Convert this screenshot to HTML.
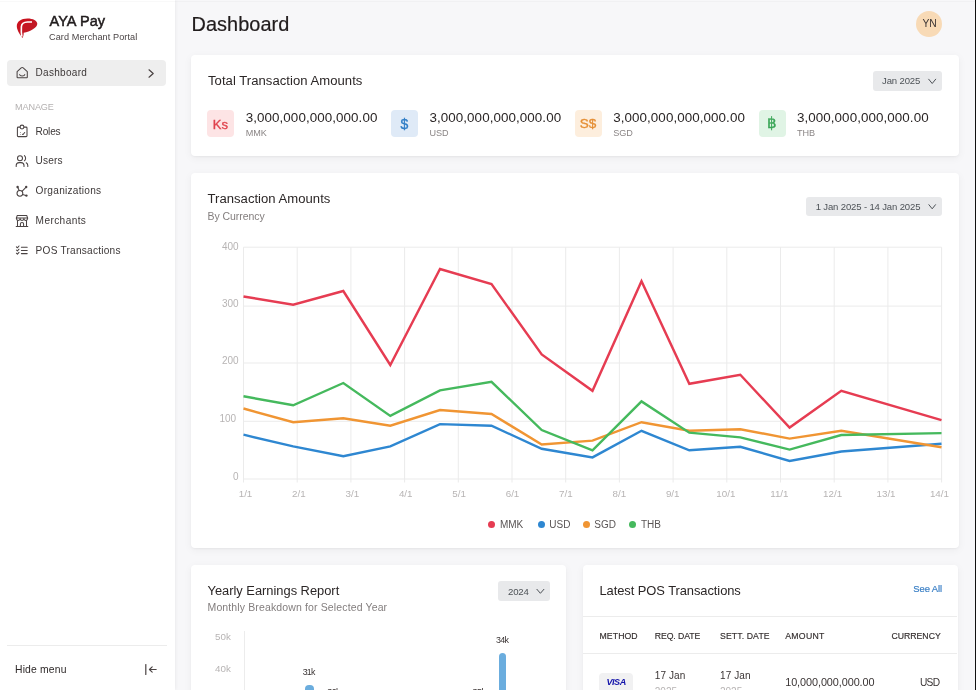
<!DOCTYPE html>
<html><head><meta charset="utf-8"><style>
html,body{margin:0;padding:0;width:976px;height:690px;overflow:hidden;background:#f6f6f9;font-family:"Liberation Sans", sans-serif;}
#root{position:relative;width:976px;height:690px;overflow:hidden;will-change:transform;}
span{position:absolute;display:block;white-space:nowrap;}
</style></head><body><div id="root">
<div style="position:absolute;left:175px;top:0px;width:801px;height:690px;background:#f7f7f9;border-radius:0px;"></div><div style="position:absolute;left:0px;top:0px;width:175px;height:690px;background:#ffffff;border-radius:0px;box-shadow:0 0 4px rgba(0,0,0,0.08);"></div><div style="position:absolute;left:0px;top:1px;width:975px;height:1px;background:rgba(0,0,0,0.025);border-radius:0px;"></div><svg style="position:absolute;left:0;top:0" width="60" height="50" viewBox="0 0 60 50">
<defs><linearGradient id="lg" x1="0" y1="0" x2="1" y2="1"><stop offset="0" stop-color="#cf0f1c"/><stop offset="1" stop-color="#b81f2a"/></linearGradient></defs>
<path d="M22.6 38.1 C20.4 35,17 30.6,16.8 26.5 C16.6 21.5,21 18.4,27.5 18.4 C33 18.4,37.3 20.5,37.3 23.8 C37.3 27.8,30.2 31.6,23.7 32.8 C23.7 34.6,23.3 36.6,22.6 38.1 Z" fill="url(#lg)"/>
<path d="M21.9 36.6 C21 33,21.2 29.5,21.4 26.6 C21.6 23.6,23.8 22.1,27.5 22 L32 22" fill="none" stroke="#ffffff" stroke-width="1.6"/>
</svg><div style="position:absolute;left:7px;top:60px;width:159px;height:25.5px;background:#eeeeee;border-radius:4px;"></div><div style="position:absolute;left:7px;top:644.5px;width:159.6px;height:1px;background:#ececec;border-radius:0px;"></div><div style="position:absolute;left:975px;top:0px;width:1px;height:690px;background:#111111;border-radius:0px;"></div><div style="position:absolute;left:916.4px;top:11px;width:26px;height:26px;background:#f8dab6;border-radius:13px;"></div><div style="position:absolute;left:191px;top:55px;width:767.5px;height:100.6px;background:#ffffff;border-radius:4px;box-shadow:0 1px 2px rgba(0,0,0,0.04),0 2px 8px rgba(0,0,0,0.05);"></div><div style="position:absolute;left:872.7px;top:71px;width:69.5px;height:20px;background:#e8e9eb;border-radius:3px;"></div><div style="position:absolute;left:207.3px;top:110px;width:27px;height:27px;background:#fde4e5;border-radius:4px;"></div><div style="position:absolute;left:391.05px;top:110px;width:27px;height:27px;background:#dfeaf7;border-radius:4px;"></div><div style="position:absolute;left:574.8px;top:110px;width:27px;height:27px;background:#fdeedd;border-radius:4px;"></div><div style="position:absolute;left:758.55px;top:110px;width:27px;height:27px;background:#e0f4e5;border-radius:4px;"></div><div style="position:absolute;left:191px;top:172.6px;width:767.5px;height:375.8px;background:#ffffff;border-radius:4px;box-shadow:0 1px 2px rgba(0,0,0,0.04),0 2px 8px rgba(0,0,0,0.05);"></div><div style="position:absolute;left:806.2px;top:196.6px;width:135.7px;height:19.6px;background:#e8e9eb;border-radius:3px;"></div><svg style="position:absolute;left:0;top:0" width="976" height="690"><line x1="243.50" y1="247.2" x2="243.50" y2="482.5" stroke="#ebebeb" stroke-width="1"/><line x1="297.20" y1="247.2" x2="297.20" y2="482.5" stroke="#ebebeb" stroke-width="1"/><line x1="350.90" y1="247.2" x2="350.90" y2="482.5" stroke="#ebebeb" stroke-width="1"/><line x1="404.60" y1="247.2" x2="404.60" y2="482.5" stroke="#ebebeb" stroke-width="1"/><line x1="458.30" y1="247.2" x2="458.30" y2="482.5" stroke="#ebebeb" stroke-width="1"/><line x1="512.00" y1="247.2" x2="512.00" y2="482.5" stroke="#ebebeb" stroke-width="1"/><line x1="565.70" y1="247.2" x2="565.70" y2="482.5" stroke="#ebebeb" stroke-width="1"/><line x1="619.40" y1="247.2" x2="619.40" y2="482.5" stroke="#ebebeb" stroke-width="1"/><line x1="673.10" y1="247.2" x2="673.10" y2="482.5" stroke="#ebebeb" stroke-width="1"/><line x1="726.80" y1="247.2" x2="726.80" y2="482.5" stroke="#ebebeb" stroke-width="1"/><line x1="780.50" y1="247.2" x2="780.50" y2="482.5" stroke="#ebebeb" stroke-width="1"/><line x1="834.20" y1="247.2" x2="834.20" y2="482.5" stroke="#ebebeb" stroke-width="1"/><line x1="887.90" y1="247.2" x2="887.90" y2="482.5" stroke="#ebebeb" stroke-width="1"/><line x1="941.60" y1="247.2" x2="941.60" y2="482.5" stroke="#ebebeb" stroke-width="1"/><line x1="243.5" y1="247.20" x2="941.6" y2="247.20" stroke="#ebebeb" stroke-width="1"/><line x1="243.5" y1="306.10" x2="941.6" y2="306.10" stroke="#ebebeb" stroke-width="1"/><line x1="243.5" y1="363.00" x2="941.6" y2="363.00" stroke="#ebebeb" stroke-width="1"/><line x1="243.5" y1="421.30" x2="941.6" y2="421.30" stroke="#ebebeb" stroke-width="1"/><line x1="243.5" y1="479.00" x2="941.6" y2="479.00" stroke="#ebebeb" stroke-width="1"/></svg><div style="position:absolute;left:488.2px;top:521px;width:7px;height:7px;background:#e63c52;border-radius:4px;"></div><div style="position:absolute;left:537.8px;top:521px;width:7px;height:7px;background:#2e87d1;border-radius:4px;"></div><div style="position:absolute;left:583px;top:521px;width:7px;height:7px;background:#f09533;border-radius:4px;"></div><div style="position:absolute;left:629.2px;top:521px;width:7px;height:7px;background:#45b95d;border-radius:4px;"></div><div style="position:absolute;left:191px;top:564.6px;width:375.3px;height:200px;background:#ffffff;border-radius:4px;box-shadow:0 1px 2px rgba(0,0,0,0.04),0 2px 8px rgba(0,0,0,0.05);"></div><div style="position:absolute;left:498.1px;top:581px;width:51.8px;height:19.7px;background:#e8e9eb;border-radius:3px;"></div><div style="position:absolute;left:244.3px;top:630.8px;width:1px;height:60px;background:#ececec;border-radius:0px;"></div><div style="position:absolute;left:305.2px;top:685.4px;width:8.4px;height:20px;background:#6badde;border-radius:4px;"></div><div style="position:absolute;left:499.1px;top:653.3px;width:7.4px;height:40px;background:#6badde;border-radius:4px;"></div><div style="position:absolute;left:583.1px;top:564.6px;width:375.4px;height:200px;background:#ffffff;border-radius:4px;box-shadow:0 1px 2px rgba(0,0,0,0.04),0 2px 8px rgba(0,0,0,0.05);"></div><div style="position:absolute;left:583.1px;top:616.2px;width:373.6px;height:1px;background:#ececec;border-radius:0px;"></div><div style="position:absolute;left:583.1px;top:652.8px;width:373.6px;height:1px;background:#ececec;border-radius:0px;"></div><div style="position:absolute;left:599.2px;top:672.6px;width:33.8px;height:25px;background:#f1f1f2;border-radius:4px;"></div>
<span style="left:49.50px;top:14.20px;font-size:14.53px;line-height:14.53px;color:#211c1d;font-weight:400;letter-spacing:0.083px;-webkit-text-stroke:0.5px #211c1d;">AYA Pay</span><span style="left:49.00px;top:33.37px;font-size:9.13px;line-height:9.13px;color:#4b4546;font-weight:400;letter-spacing:0.079px;">Card Merchant Portal</span><span style="left:35.50px;top:67.83px;font-size:10.0px;line-height:10.0px;color:#3d3838;font-weight:400;letter-spacing:0.312px;">Dashboard</span><span style="left:15.00px;top:102.69px;font-size:9.11px;line-height:9.11px;color:#b4b1b1;font-weight:400;letter-spacing:-0.100px;">MANAGE</span><span style="left:35.60px;top:126.85px;font-size:10.1px;line-height:10.1px;color:#3d3838;font-weight:400;letter-spacing:-0.200px;">Roles</span><span style="left:35.60px;top:156.35px;font-size:10.1px;line-height:10.1px;color:#3d3838;font-weight:400;letter-spacing:0.175px;">Users</span><span style="left:35.60px;top:186.35px;font-size:10.1px;line-height:10.1px;color:#3d3838;font-weight:400;letter-spacing:0.275px;">Organizations</span><span style="left:35.60px;top:216.35px;font-size:10.1px;line-height:10.1px;color:#3d3838;font-weight:400;letter-spacing:0.400px;">Merchants</span><span style="left:35.60px;top:246.35px;font-size:10.1px;line-height:10.1px;color:#3d3838;font-weight:400;letter-spacing:0.233px;">POS Transactions</span><span style="left:15.00px;top:665.24px;font-size:10.35px;line-height:10.35px;color:#2e2929;font-weight:400;letter-spacing:0.175px;">Hide menu</span><span style="left:191.50px;top:14.85px;font-size:19.9px;line-height:19.9px;color:#211c1d;font-weight:400;letter-spacing:0.062px;-webkit-text-stroke:0.2px #211c1d;">Dashboard</span><span style="left:922.60px;top:18.66px;font-size:10.33px;line-height:10.33px;color:#3a3434;font-weight:400;letter-spacing:-0.200px;">YN</span><span style="left:208.00px;top:74.13px;font-size:13.08px;line-height:13.08px;color:#2b2626;font-weight:400;letter-spacing:0.042px;">Total Transaction Amounts</span><span style="left:882.00px;top:76.41px;font-size:9.56px;line-height:9.56px;color:#4d5257;font-weight:400;letter-spacing:-0.143px;">Jan 2025</span><span style="left:212.80px;top:117.50px;font-size:13px;line-height:13px;color:#e0434e;font-weight:400;letter-spacing:0.000px;-webkit-text-stroke:0.35px #e0434e;">Ks</span><span style="left:245.70px;top:111.27px;font-size:13.38px;line-height:13.38px;color:#2b2626;font-weight:400;letter-spacing:0.079px;">3,000,000,000,000.00</span><span style="left:245.70px;top:129.10px;font-size:9.1px;line-height:9.1px;color:#8a8585;font-weight:400;letter-spacing:0.000px;">MMK</span><span style="left:400.55px;top:116.65px;font-size:14px;line-height:14px;color:#2f7dc6;font-weight:400;letter-spacing:0.000px;-webkit-text-stroke:0.35px #2f7dc6;">$</span><span style="left:429.45px;top:111.27px;font-size:13.38px;line-height:13.38px;color:#2b2626;font-weight:400;letter-spacing:0.079px;">3,000,000,000,000.00</span><span style="left:429.45px;top:129.10px;font-size:9.1px;line-height:9.1px;color:#8a8585;font-weight:400;letter-spacing:0.000px;">USD</span><span style="left:579.80px;top:117.07px;font-size:13.5px;line-height:13.5px;color:#e58f35;font-weight:400;letter-spacing:0.000px;-webkit-text-stroke:0.35px #e58f35;">S$</span><span style="left:613.20px;top:111.27px;font-size:13.38px;line-height:13.38px;color:#2b2626;font-weight:400;letter-spacing:0.079px;">3,000,000,000,000.00</span><span style="left:613.20px;top:129.10px;font-size:9.1px;line-height:9.1px;color:#8a8585;font-weight:400;letter-spacing:0.000px;">SGD</span><span style="left:766.55px;top:116.23px;font-size:14.5px;line-height:14.5px;color:#3aa657;font-weight:400;letter-spacing:0.000px;-webkit-text-stroke:0.35px #3aa657;">฿</span><span style="left:796.95px;top:111.27px;font-size:13.38px;line-height:13.38px;color:#2b2626;font-weight:400;letter-spacing:0.079px;">3,000,000,000,000.00</span><span style="left:796.95px;top:129.10px;font-size:9.1px;line-height:9.1px;color:#8a8585;font-weight:400;letter-spacing:0.000px;">THB</span><span style="left:207.50px;top:192.43px;font-size:13.08px;line-height:13.08px;color:#2b2626;font-weight:400;letter-spacing:0.028px;">Transaction Amounts</span><span style="left:207.50px;top:211.41px;font-size:10.5px;line-height:10.5px;color:#837e7e;font-weight:400;letter-spacing:-0.060px;">By Currency</span><span style="left:815.70px;top:202.03px;font-size:9.53px;line-height:9.53px;color:#4d5257;font-weight:400;letter-spacing:-0.139px;">1 Jan 2025 - 14 Jan 2025</span><span style="left:222.00px;top:241.94px;font-size:10px;line-height:10px;color:#b7b4b4;font-weight:400;letter-spacing:0.000px;">400</span><span style="left:222.00px;top:298.74px;font-size:10px;line-height:10px;color:#b7b4b4;font-weight:400;letter-spacing:0.000px;">300</span><span style="left:222.00px;top:356.24px;font-size:10px;line-height:10px;color:#b7b4b4;font-weight:400;letter-spacing:0.000px;">200</span><span style="left:219.50px;top:413.94px;font-size:10px;line-height:10px;color:#b7b4b4;font-weight:400;letter-spacing:0.000px;">100</span><span style="left:233.00px;top:471.74px;font-size:10px;line-height:10px;color:#b7b4b4;font-weight:400;letter-spacing:0.000px;">0</span><span style="left:238.70px;top:489.30px;font-size:9.8px;line-height:9.8px;color:#b7b4b4;font-weight:400;letter-spacing:0.000px;">1/1</span><span style="left:292.10px;top:489.30px;font-size:9.8px;line-height:9.8px;color:#b7b4b4;font-weight:400;letter-spacing:0.000px;">2/1</span><span style="left:345.50px;top:489.30px;font-size:9.8px;line-height:9.8px;color:#b7b4b4;font-weight:400;letter-spacing:0.000px;">3/1</span><span style="left:398.90px;top:489.30px;font-size:9.8px;line-height:9.8px;color:#b7b4b4;font-weight:400;letter-spacing:0.000px;">4/1</span><span style="left:452.30px;top:489.30px;font-size:9.8px;line-height:9.8px;color:#b7b4b4;font-weight:400;letter-spacing:0.000px;">5/1</span><span style="left:505.70px;top:489.30px;font-size:9.8px;line-height:9.8px;color:#b7b4b4;font-weight:400;letter-spacing:0.000px;">6/1</span><span style="left:559.10px;top:489.30px;font-size:9.8px;line-height:9.8px;color:#b7b4b4;font-weight:400;letter-spacing:0.000px;">7/1</span><span style="left:612.50px;top:489.30px;font-size:9.8px;line-height:9.8px;color:#b7b4b4;font-weight:400;letter-spacing:0.000px;">8/1</span><span style="left:665.90px;top:489.30px;font-size:9.8px;line-height:9.8px;color:#b7b4b4;font-weight:400;letter-spacing:0.000px;">9/1</span><span style="left:716.30px;top:489.30px;font-size:9.8px;line-height:9.8px;color:#b7b4b4;font-weight:400;letter-spacing:0.000px;">10/1</span><span style="left:770.20px;top:489.30px;font-size:9.8px;line-height:9.8px;color:#b7b4b4;font-weight:400;letter-spacing:0.000px;">11/1</span><span style="left:823.10px;top:489.30px;font-size:9.8px;line-height:9.8px;color:#b7b4b4;font-weight:400;letter-spacing:0.000px;">12/1</span><span style="left:876.50px;top:489.30px;font-size:9.8px;line-height:9.8px;color:#b7b4b4;font-weight:400;letter-spacing:0.000px;">13/1</span><span style="left:929.90px;top:489.30px;font-size:9.8px;line-height:9.8px;color:#b7b4b4;font-weight:400;letter-spacing:0.000px;">14/1</span><span style="left:499.90px;top:519.53px;font-size:10px;line-height:10px;color:#5a5555;font-weight:400;letter-spacing:0.000px;">MMK</span><span style="left:549.30px;top:519.53px;font-size:10px;line-height:10px;color:#5a5555;font-weight:400;letter-spacing:0.000px;">USD</span><span style="left:594.30px;top:519.53px;font-size:10px;line-height:10px;color:#5a5555;font-weight:400;letter-spacing:0.000px;">SGD</span><span style="left:640.90px;top:519.53px;font-size:10px;line-height:10px;color:#5a5555;font-weight:400;letter-spacing:0.000px;">THB</span><span style="left:207.50px;top:585.19px;font-size:12.89px;line-height:12.89px;color:#2b2626;font-weight:400;letter-spacing:-0.010px;">Yearly Earnings Report</span><span style="left:207.50px;top:602.41px;font-size:10.5px;line-height:10.5px;color:#837e7e;font-weight:400;letter-spacing:0.132px;">Monthly Breakdown for Selected Year</span><span style="left:508.10px;top:586.75px;font-size:9.63px;line-height:9.63px;color:#4d5257;font-weight:400;letter-spacing:-0.233px;">2024</span><span style="left:215.00px;top:632.30px;font-size:9.8px;line-height:9.8px;color:#b7b4b4;font-weight:400;letter-spacing:0.000px;">50k</span><span style="left:215.00px;top:663.90px;font-size:9.8px;line-height:9.8px;color:#b7b4b4;font-weight:400;letter-spacing:0.000px;">40k</span><span style="left:302.65px;top:668.46px;font-size:8.79px;line-height:8.79px;color:#3a3434;font-weight:400;letter-spacing:-0.750px;">31k</span><span style="left:495.90px;top:635.98px;font-size:8.88px;line-height:8.88px;color:#3a3434;font-weight:400;letter-spacing:-0.600px;">34k</span><span style="left:327.20px;top:688.13px;font-size:8.94px;line-height:8.94px;color:#3a3434;font-weight:400;letter-spacing:-0.500px;">30k</span><span style="left:472.50px;top:688.13px;font-size:8.94px;line-height:8.94px;color:#3a3434;font-weight:400;letter-spacing:-0.500px;">35k</span><span style="left:599.50px;top:585.15px;font-size:12.93px;line-height:12.93px;color:#2b2626;font-weight:400;letter-spacing:-0.073px;">Latest POS Transactions</span><span style="left:913.30px;top:583.64px;font-size:9.4px;line-height:9.4px;color:#3c80c6;font-weight:400;letter-spacing:-0.050px;-webkit-text-stroke:0.2px #3c80c6;">See All</span><span style="left:599.50px;top:631.74px;font-size:8.7px;line-height:8.7px;color:#332d2d;font-weight:400;letter-spacing:0.100px;-webkit-text-stroke:0.15px #332d2d;">METHOD</span><span style="left:654.80px;top:631.74px;font-size:8.7px;line-height:8.7px;color:#332d2d;font-weight:400;letter-spacing:-0.088px;-webkit-text-stroke:0.15px #332d2d;">REQ. DATE</span><span style="left:720.00px;top:631.74px;font-size:8.7px;line-height:8.7px;color:#332d2d;font-weight:400;letter-spacing:0.111px;-webkit-text-stroke:0.15px #332d2d;">SETT. DATE</span><span style="left:785.20px;top:631.74px;font-size:8.7px;line-height:8.7px;color:#332d2d;font-weight:400;letter-spacing:0.320px;-webkit-text-stroke:0.15px #332d2d;">AMOUNT</span><span style="left:891.40px;top:631.74px;font-size:8.7px;line-height:8.7px;color:#332d2d;font-weight:400;letter-spacing:0.014px;-webkit-text-stroke:0.15px #332d2d;">CURRENCY</span><span style="left:606.55px;top:678.14px;font-size:9.05px;line-height:9.05px;color:#1414aa;font-weight:700;letter-spacing:-0.500px;font-style:italic;">VISA</span><span style="left:654.80px;top:670.93px;font-size:10.0px;line-height:10.0px;color:#3a3434;font-weight:400;letter-spacing:0.100px;">17 Jan</span><span style="left:720.00px;top:670.93px;font-size:10.0px;line-height:10.0px;color:#3a3434;font-weight:400;letter-spacing:0.100px;">17 Jan</span><span style="left:654.80px;top:686.53px;font-size:10px;line-height:10px;color:#b7b4b4;font-weight:400;letter-spacing:0.000px;">2025</span><span style="left:720.00px;top:686.53px;font-size:10px;line-height:10px;color:#b7b4b4;font-weight:400;letter-spacing:0.000px;">2025</span><span style="left:785.20px;top:676.90px;font-size:10.87px;line-height:10.87px;color:#3a3434;font-weight:400;letter-spacing:-0.075px;">10,000,000,000.00</span><span style="left:919.90px;top:678.27px;font-size:10.2px;line-height:10.2px;color:#3a3434;font-weight:400;letter-spacing:-0.700px;">USD</span>
<svg style="position:absolute;left:0;top:0" width="976" height="690"><polyline points="243.5,434.7 293.2,446.4 343.3,456.2 390.3,446.4 440.0,424.1 491.5,425.7 541.7,448.8 592.5,457.4 641.5,430.8 689.3,450.3 740.3,446.8 789.6,460.9 841.3,451.5 941.5,443.7" fill="none" stroke="#2e87d1" stroke-width="2.4" stroke-linejoin="miter" stroke-linecap="butt"/><polyline points="243.5,408.5 293.2,422.2 343.3,418.2 390.3,425.7 440.0,410.0 491.5,414.0 541.7,444.5 592.5,440.6 641.5,422.2 689.3,430.8 740.3,429.2 789.6,438.6 841.3,430.8 941.5,447.2" fill="none" stroke="#f09533" stroke-width="2.4" stroke-linejoin="miter" stroke-linecap="butt"/><polyline points="243.5,396.3 293.2,405.3 343.3,383.0 390.3,415.9 440.0,390.4 491.5,381.8 541.7,430.0 592.5,450.3 641.5,401.4 689.3,432.7 740.3,437.4 789.6,449.6 841.3,435.0 941.5,433.1" fill="none" stroke="#45b95d" stroke-width="2.4" stroke-linejoin="miter" stroke-linecap="butt"/><polyline points="243.5,296.5 293.2,304.7 343.3,291.0 390.3,365.0 440.0,269.0 491.5,284.0 541.7,354.4 592.5,390.8 641.5,281.2 689.3,383.8 740.3,374.8 789.6,427.6 841.3,390.8 941.5,420.2" fill="none" stroke="#e63c52" stroke-width="2.4" stroke-linejoin="miter" stroke-linecap="butt"/></svg><svg style="position:absolute;left:0;top:0" width="175" height="690" fill="none" stroke="#4a4343" stroke-width="1.05" stroke-linecap="round" stroke-linejoin="round">
<!-- dashboard home -->
<path d="M17.1 71.6 L21.2 67.9 Q22.2 67.1 23.2 67.9 L27.3 71.6 L27.3 77.2 Q27.3 77.8 26.7 77.8 L17.7 77.8 Q17.1 77.8 17.1 77.2 Z"/>
<path d="M19.6 74.5 Q19.8 75.9 22.2 75.9 Q24.6 75.9 24.8 74.5"/>
<!-- chevron -->
<path d="M149 69.8 L153.2 73.5 L149 77.2" stroke-width="1.2"/>
<!-- roles clipboard -->
<path d="M19.9 127.1 L18.3 127.1 Q17.4 127.1 17.4 128 L17.4 135.7 Q17.4 136.6 18.3 136.6 L26.1 136.6 Q27 136.6 27 135.7 L27 128 Q27 127.1 26.1 127.1 L24.1 127.1"/>
<circle cx="22" cy="127" r="1.9"/>
<path d="M22.4 134.3 L23.1 134.5 L24.7 132.5"/>
<circle cx="20.4" cy="132.5" r="0.45" fill="#4a4343" stroke="none"/>
<circle cx="20.4" cy="134.6" r="0.45" fill="#4a4343" stroke="none"/>
<!-- users -->
<circle cx="20" cy="158.2" r="2.5"/>
<path d="M16.2 166.4 L16.2 165.6 Q16.2 162.6 19.2 162.6 L21 162.6 Q24 162.6 24 165.6 L24 166.4"/>
<path d="M24.4 155.6 Q25.6 156.6 25.6 158.2 Q25.6 159.8 24.4 160.8"/>
<path d="M26.2 162.8 Q27.8 163.6 27.8 165.6 L27.8 166.4"/>
<!-- organizations -->
<circle cx="19.9" cy="193.3" r="2.9"/>
<path d="M22 191.3 L25.6 187.6 M22.7 194.6 L25.8 195.4 M19.2 190.5 L17.8 187.6"/>
<circle cx="17.6" cy="187" r="1.2" fill="#4a4343" stroke="none"/>
<circle cx="26.2" cy="187" r="1.2" fill="#4a4343" stroke="none"/>
<circle cx="26.4" cy="195.6" r="1.2" fill="#4a4343" stroke="none"/>
<!-- merchants store -->
<path d="M17.3 215.4 L26.7 215.4 L27.6 217.9 L16.4 217.9 Z"/>
<path d="M16.4 217.9 L16.4 218.6 Q16.4 220.4 18.3 220.4 Q20.1 220.4 20.1 218.6 Q20.1 220.4 22 220.4 Q23.9 220.4 23.9 218.6 Q23.9 220.4 25.7 220.4 Q27.6 220.4 27.6 218.6 L27.6 217.9"/>
<path d="M17.5 220.4 L17.5 226.5 L26.5 226.5 L26.5 220.4 M16.2 226.5 L27.8 226.5"/>
<path d="M20.4 226.5 L20.4 224 Q20.4 222.5 22 222.5 Q23.6 222.5 23.6 224 L23.6 226.5"/>
<!-- POS list -->
<path d="M16.4 246.8 L17.4 247.8 L19 246 M16.4 250 L17.4 251 L19 249.2 M16.4 253.2 L17.4 254.2 L19 252.4"/>
<path d="M21.4 247.2 L27.2 247.2 M21.4 250.4 L27.2 250.4 M21.4 253.6 L27.2 253.6"/>
<!-- hide menu -->
<path d="M145.8 664.6 L145.8 674.4" stroke-width="1.2"/>
<path d="M156.2 669.5 L149.4 669.5 M152.2 666.8 L149.4 669.5 L152.2 672.2" stroke-width="1.1"/>
</svg><svg style="position:absolute;left:0;top:0" width="976" height="690" fill="none" stroke="#4d5257" stroke-width="1" stroke-linecap="round" stroke-linejoin="round"><path d="M928.6999999999999 79.2 L932.2 83.5 L935.7 79.2"/><path d="M928.9 204.70000000000002 L932.2 208.8 L935.5 204.70000000000002"/><path d="M536.9 589.3 L540.4000000000001 593.3 L543.9000000000001 589.3"/></svg>
</div></body></html>
